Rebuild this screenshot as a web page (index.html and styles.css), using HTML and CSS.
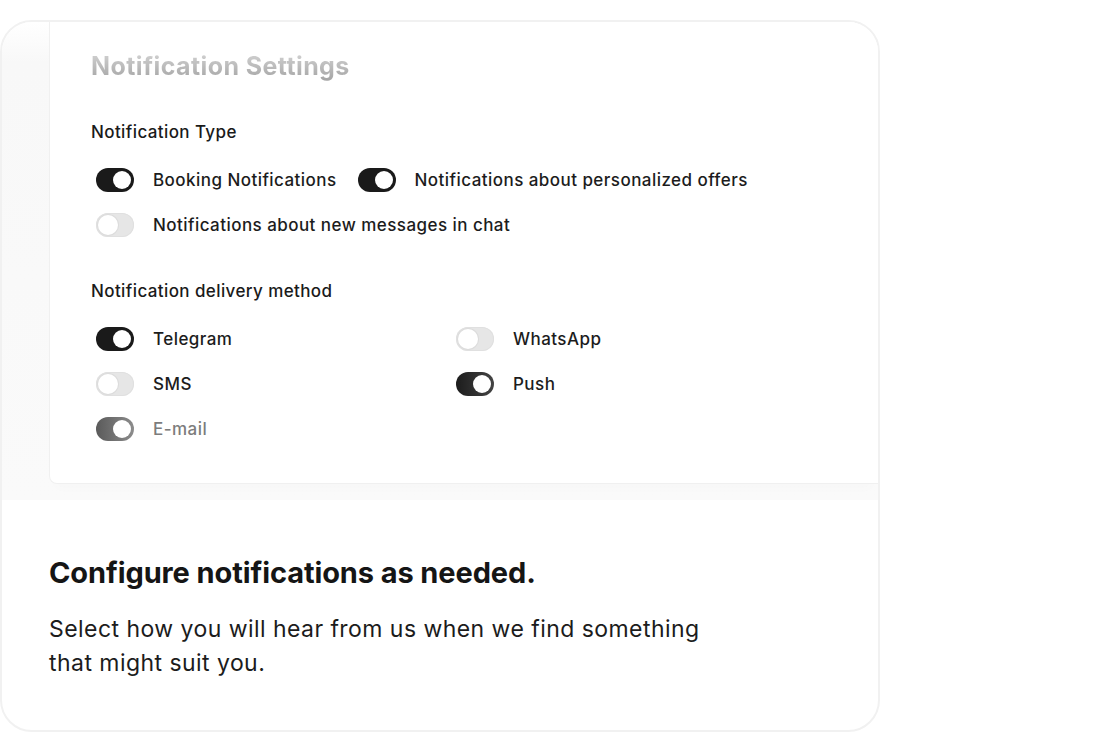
FILE: index.html
```html
<!DOCTYPE html>
<html lang="en">
<head>
<meta charset="utf-8">
<link rel="stylesheet" href="styles.css">
</head>
<body>
<div class="card">
  <div class="stage">
    <div class="panel">
      <h2 class="panel-title">Notification Settings</h2>
      <section class="group">
        <h3 class="group-title">Notification Type</h3>
        <div class="wrap-list">
          <label class="opt"><span class="tgl on"></span><span>Booking Notifications</span></label>
          <label class="opt"><span class="tgl on"></span><span>Notifications about personalized offers</span></label>
          <label class="opt"><span class="tgl"></span><span>Notifications about new messages in chat</span></label>
        </div>
      </section>
      <section class="group">
        <h3 class="group-title">Notification delivery method</h3>
        <div class="grid-list">
          <label class="opt"><span class="tgl on"></span><span>Telegram</span></label>
          <label class="opt"><span class="tgl"></span><span>WhatsApp</span></label>
          <label class="opt"><span class="tgl"></span><span>SMS</span></label>
          <label class="opt"><span class="tgl on soft"></span><span>Push</span></label>
          <label class="opt disabled"><span class="tgl on dim"></span><span>E-mail</span></label>
        </div>
      </section>
    </div>
  </div>
  <div class="copy">
    <h1 class="headline">Configure notifications as needed.</h1>
    <p class="lead">Select how you will hear from us when we find something<br>that might suit you.</p>
  </div>
</div>
</body>
</html>
```

FILE: styles.css
```css
* { box-sizing: border-box; }
html, body { margin: 0; padding: 0; background: #fff; }
body {
  font-family: Inter, "Noto Sans", "Liberation Sans", sans-serif;
  color: #1a1a1a;
  width: 1100px;
  height: 732px;
  overflow: hidden;
}
.card {
  margin-top: 20px;
  width: 880px;
  height: 712px;
  border: 2px solid #f1f1f1;
  border-radius: 32px;
  overflow: hidden;
  background: #fff;
}
.stage {
  height: 478px;
  padding-left: 47px;
  background: linear-gradient(to bottom, #ffffff 0px, #f8f8f8 40px, #fafafa 100%);
}
.panel {
  background: #fff;
  border: 1px solid #f0f0f0;
  border-top: none;
  border-right: none;
  border-radius: 0 0 0 8px;
  height: 462px;
  padding: 28px 0 0 41px;
  box-shadow: 0 10px 12px -6px rgba(0,0,0,0.015);
}
.panel-title {
  margin: 0;
  font-size: 25px;
  line-height: 32px;
  font-weight: 700;
  letter-spacing: 0.4px;
  background: linear-gradient(to bottom, #d6d6d6, #a2a2a2);
  -webkit-background-clip: text;
  background-clip: text;
  color: transparent;
  display: inline-block;
}
.group { margin-top: 40px; }
.group + .group { margin-top: 44px; }
.group-title {
  margin: 0 0 25px;
  font-size: 17px;
  line-height: 21px;
  font-weight: 500;
  letter-spacing: 0.4px;
  color: #1a1a1a;
}
.wrap-list {
  display: flex;
  flex-wrap: wrap;
  column-gap: 21px;
  row-gap: 21px;
  width: 720px;
  padding-left: 5px;
}
.grid-list {
  display: grid;
  grid-template-columns: 360px 360px;
  row-gap: 21px;
  padding-left: 5px;
}
.opt {
  display: flex;
  align-items: center;
  gap: 19px;
  height: 24px;
  font-size: 17px;
  font-weight: 500;
  letter-spacing: 0.45px;
  color: #1c1c1c;
}
.opt.disabled { color: #7c7c7c; }
.tgl {
  position: relative;
  width: 38px;
  height: 24px;
  border-radius: 12px;
  background: #e6e6e6;
  box-shadow: inset 0 0 0 1px #e0e0e0;
  flex: none;
}
.tgl::after {
  content: "";
  position: absolute;
  top: 2px;
  left: 2px;
  width: 20px;
  height: 20px;
  border-radius: 50%;
  background: #fff;
  box-shadow: 0 0 0 1px #dcdcdc;
}
.tgl.on { background: #1a1a1a; box-shadow: none; }
.tgl.on::after { left: auto; right: 3px; top: 3px; width: 18px; height: 18px; box-shadow: none; }
.tgl.soft { background: linear-gradient(to right, #1c1c1c, #444); }
.tgl.dim { background: linear-gradient(to right, #5a5a5a, #8c8c8c); }
.copy { padding: 55px 0 0 47px; }
.headline {
  margin: 0;
  font-size: 29px;
  line-height: 36px;
  font-weight: 700;
  letter-spacing: -0.1px;
  color: #151515;
}
.lead {
  margin: 21px 0 0;
  font-size: 23px;
  line-height: 34px;
  font-weight: 400;
  letter-spacing: 0.45px;
  color: #1c1c1c;
}
```
